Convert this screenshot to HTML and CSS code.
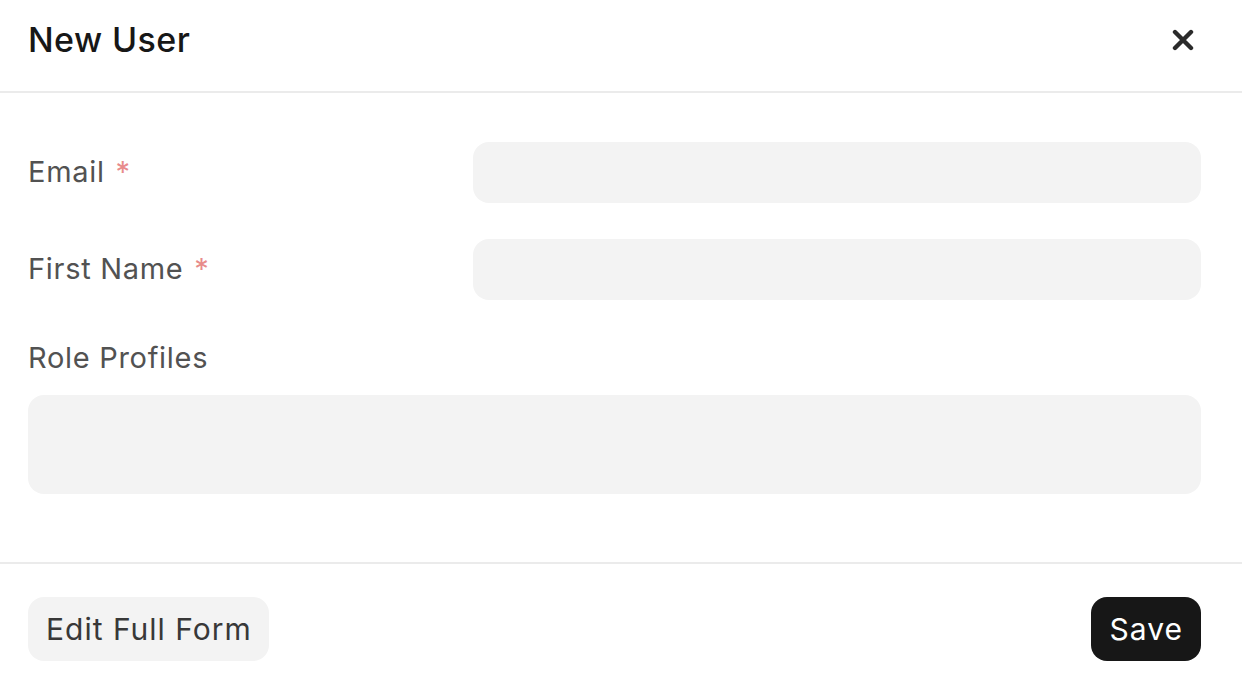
FILE: index.html
```html
<!DOCTYPE html>
<html>
<head>
<meta charset="utf-8">
<link rel="stylesheet" href="styles.css">
</head>
<body>
<div class="modal">
  <header class="modal-header">
    <h1 class="title">New User</h1>
    <button class="close" aria-label="Close">
      <svg width="22" height="22" viewBox="0 0 22 22"><path d="M3 3 L19 19 M19 3 L3 19" stroke="#2b2b2b" stroke-width="4.4" stroke-linecap="round"/></svg>
    </button>
  </header>
  <main class="modal-body">
    <div class="row">
      <label class="label">Email <span class="req">*</span></label>
      <div class="input"></div>
    </div>
    <div class="row">
      <label class="label">First Name <span class="req">*</span></label>
      <div class="input"></div>
    </div>
    <div class="stack">
      <label class="label">Role Profiles</label>
      <div class="textarea"></div>
    </div>
  </main>
  <footer class="modal-footer">
    <button class="btn btn-secondary">Edit Full Form</button>
    <button class="btn btn-primary">Save</button>
  </footer>
</div>
</body>
</html>
```

FILE: styles.css
```css
html, body {
  margin: 0;
  padding: 0;
  background: #ffffff;
}
body {
  font-family: Inter, "Noto Sans", sans-serif;
  width: 1242px;
  height: 688px;
  overflow: hidden;
}
.modal {
  display: flex;
  flex-direction: column;
  height: 688px;
}
.modal-header {
  border-bottom: 2px solid #ebebeb;
  box-sizing: border-box;
  display: flex;
  align-items: center;
  justify-content: space-between;
  padding: 0 48px 0 28px;
  height: 93px;
}
.title {
  margin: 0;
  font-size: 34px;
  font-weight: 500;
  color: #171717;
  letter-spacing: 0.4px;
  line-height: 40px;
  position: relative;
  top: -6px;
}
.close {
  border: 0;
  background: transparent;
  padding: 0;
  width: 22px;
  height: 22px;
  display: flex;
  position: relative;
  top: -6px;
}
.modal-body {
  padding: 49px 41px 0 28px;
  display: flex;
  flex-direction: column;
  gap: 36px;
  height: 471px;
  box-sizing: border-box;
  border-bottom: 2px solid #ebebeb;
}
.row {
  display: grid;
  grid-template-columns: 445px 1fr;
  align-items: center;
}
.label {
  font-size: 29px;
  color: #525252;
  line-height: 36px;
  letter-spacing: 0.7px;
  position: relative;
  top: -1px;
}
.req {
  color: #e88b8b;
  margin-left: 2px;
}
.input {
  height: 61px;
  background: #f3f3f3;
  border-radius: 16px;
}
.stack {
  display: flex;
  flex-direction: column;
  gap: 18px;
  margin-top: 5px;
}
.textarea {
  height: 99px;
  background: #f3f3f3;
  border-radius: 16px;
}
.modal-footer {
  display: flex;
  justify-content: space-between;
  align-items: center;
  padding: 33px 41px 0 28px;
}
.btn {
  border: 0;
  height: 64px;
  border-radius: 16px;
  font-family: Inter, "Noto Sans", sans-serif;
  font-size: 30px;
  line-height: 64px;
  letter-spacing: 1px;
}
.btn-secondary {
  background: #f3f3f3;
  color: #383838;
  padding: 0 17px 0 18px;
}
.btn-primary {
  background: #171717;
  color: #ffffff;
  padding: 0 18px 0 19px;
}
```
